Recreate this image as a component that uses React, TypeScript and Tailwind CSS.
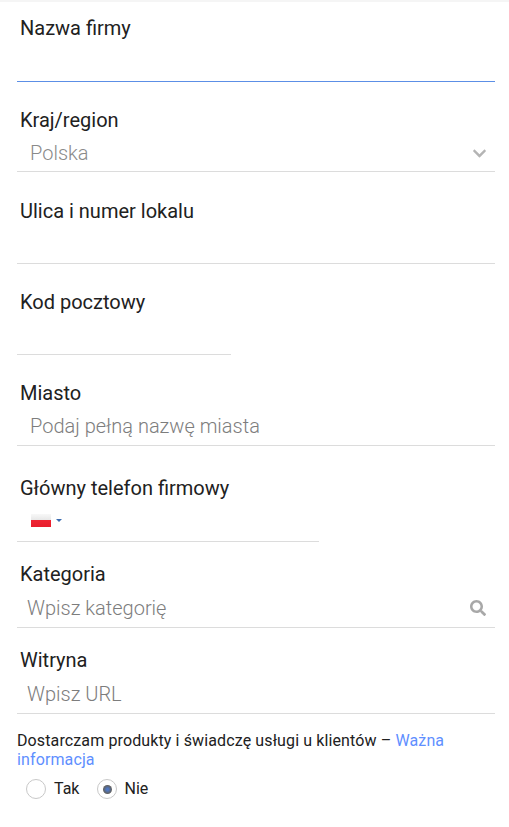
import { FaChevronDown, FaSearch } from "react-icons/fa";

function Label({ children }: { children: React.ReactNode }) {
  return <div className="px-[3px] text-[20px] leading-[24px] text-[#212121]">{children}</div>;
}

export default function App() {
  return (
    <div className="h-[827px] w-[509px] overflow-hidden bg-white font-['Roboto',sans-serif]">
      <div className="h-[2px] bg-[#f5f5f5]" />
      <div className="px-[17px] pt-[14px]">
        <Label>Nazwa firmy</Label>
        <div className="mt-[26px] h-[16px] w-[478px] border-b border-[#5c8fe6]" />

        <div className="mt-[26px]">
          <Label>Kraj/region</Label>
        </div>
        <div className="flex h-[40px] w-[478px] items-center justify-between border-b border-[#dcdcdc] pl-[13px] pr-[8px] pt-[3px] text-[20px] font-light text-[#8a8a8a]">
          <span>Polska</span>
          <FaChevronDown className="h-[15px] w-[15px] text-[#b4b4b4]" />
        </div>

        <div className="mt-[27px]">
          <Label>Ulica i numer lokalu</Label>
        </div>
        <div className="h-[41px] w-[478px] border-b border-[#dcdcdc]" />

        <div className="mt-[26px]">
          <Label>Kod pocztowy</Label>
        </div>
        <div className="h-[41px] w-[214px] border-b border-[#dcdcdc]" />

        <div className="mt-[26px]">
          <Label>Miasto</Label>
        </div>
        <div className="flex h-[41px] w-[478px] items-center border-b border-[#dcdcdc] pl-[13px] pt-[2px] text-[20px] font-light text-[#7d7d7d]">
          Podaj pełną nazwę miasta
        </div>

        <div className="mt-[30px]">
          <Label>Główny telefon firmowy</Label>
        </div>
        <div className="flex h-[42px] w-[302px] items-center gap-[5px] border-b border-[#dcdcdc] pl-[14px]">
          <div className="h-[13px] w-[20px] bg-[linear-gradient(#f8f8f8_0%,#e6e6e6_50%,#ee2433_50%,#e81d2c_100%)]" />
          <div className="h-0 w-0 border-x-[3px] border-t-[3px] border-x-transparent border-t-[#3b6cb0]" />
        </div>

        <div className="mt-[20px]">
          <Label>Kategoria</Label>
        </div>
        <div className="flex h-[42px] w-[478px] items-center justify-between border-b border-[#dcdcdc] pl-[10px] pr-[9px] pt-[3px] text-[20px] font-light text-[#7d7d7d]">
          <span>Wpisz kategorię</span>
          <FaSearch className="h-[16px] w-[16px] text-[#a8a8a8]" />
        </div>

        <div className="mt-[20px]">
          <Label>Witryna</Label>
        </div>
        <div className="flex h-[42px] w-[478px] items-center border-b border-[#dcdcdc] pl-[10px] pt-[3px] text-[20px] font-light text-[#7d7d7d]">
          Wpisz URL
        </div>

        <p className="mt-[17px] w-[478px] text-[16px] leading-[19px] tracking-[0.12px] text-[#212121]">
          Dostarczam produkty i świadczę usługi u klientów – <span className="text-[#5f8fff]">Ważna informacja</span>
        </p>
        <div className="mt-[8px] flex items-center pl-[9px] text-[16px] text-[#212121]">
          <div className="h-[20px] w-[20px] rounded-full border border-[#c8c8c8]" />
          <span className="ml-[8px]">Tak</span>
          <div className="ml-[18px] flex h-[20px] w-[20px] items-center justify-center rounded-full border border-[#c8c8c8]">
            <div className="h-[9px] w-[9px] rounded-full bg-[radial-gradient(#4f78c4_15%,#616161_65%)]" />
          </div>
          <span className="ml-[7px]">Nie</span>
        </div>
      </div>
    </div>
  );
}
